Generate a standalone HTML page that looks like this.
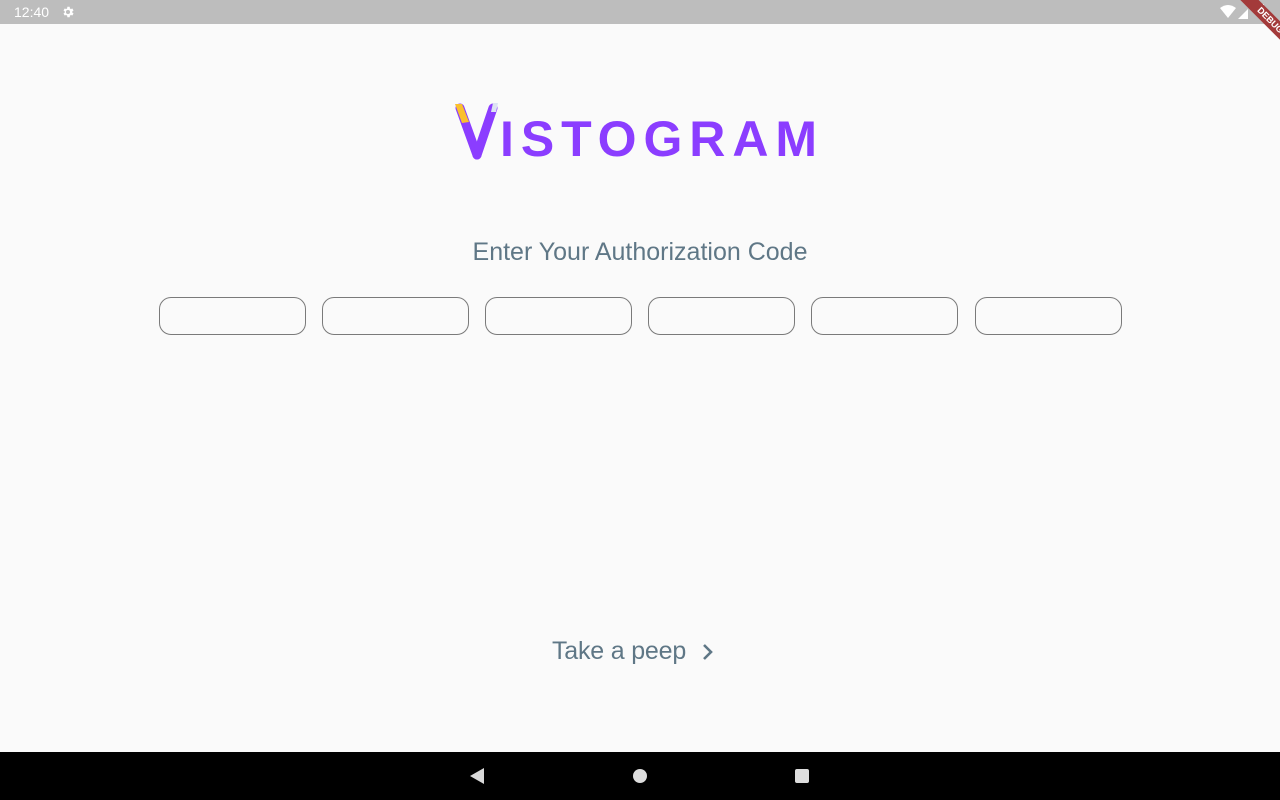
<!DOCTYPE html>
<html><head><style>
body{margin:0;width:1280px;height:800px;background:#fafafa;position:relative;overflow:hidden;font-family:"Liberation Sans",sans-serif}
.sb{position:absolute;top:0;left:0;width:1280px;height:24px;background:#bdbdbd;color:#fff;font-size:14px}
.nav{position:absolute;bottom:0;left:0;width:1280px;height:48px;background:#000}
.t{position:absolute;width:1280px;text-align:center;color:#5f7786}
.box{position:absolute;top:297px;width:145px;height:36px;border:1px solid #7a7a7a;border-radius:12px}
</style></head><body>
<div class="sb"><span style="position:absolute;left:14px;top:4px">12:40</span>
<svg style="position:absolute;left:61px;top:5px" width="14" height="14" viewBox="0 0 24 24"><path fill="#fff" d="M19.4 13a7.5 7.5 0 0 0 0-2l2.1-1.6-2-3.5-2.5 1a7 7 0 0 0-1.7-1L14.9 3h-4l-.4 2.9a7 7 0 0 0-1.7 1l-2.5-1-2 3.5L6.4 11a7.5 7.5 0 0 0 0 2l-2.1 1.6 2 3.5 2.5-1a7 7 0 0 0 1.7 1l.4 2.9h4l.4-2.9a7 7 0 0 0 1.7-1l2.5 1 2-3.5zM12 15.5a3.5 3.5 0 1 1 0-7 3.5 3.5 0 0 1 0 7z"/></svg>
<svg style="position:absolute;left:1220px;top:5px" width="16" height="13" viewBox="0 0 16 13"><path fill="#fff" d="M0 3Q8-3 16 3L8 13z"/></svg>
<svg style="position:absolute;left:1238px;top:9px" width="10" height="10"><path fill="#fff" d="M10 0V10H0z"/></svg>
<div style="position:absolute;left:1258px;top:4px;width:6px;height:12px;background:#fff"></div>
</div>
<div style="position:absolute;left:1230px;top:14px;width:80px;height:13px;background:#a33a3a;transform:rotate(45deg);color:#fff;font-size:9px;font-weight:bold;text-align:center;line-height:13px">DEBUG</div>
<svg style="position:absolute;left:440px;top:95px" width="400" height="75">
<path d="M20 13 L37 60" stroke="#8b3dff" stroke-width="9" stroke-linecap="round"/>
<path d="M53 13 L37 60" stroke="#8b3dff" stroke-width="9" stroke-linecap="round"/>
<path d="M15 9 L22 9 L29 27 L22 28z" fill="#fbc02d"/>
<path d="M53 8 L58 8 L56 17 L51 17z" fill="#dde3f3"/>
<text x="60" y="61" font-family="Liberation Sans" font-weight="bold" font-size="50" fill="#8b3dff" textLength="317" lengthAdjust="spacing">ISTOGRAM</text>
</svg>
<div class="t" style="top:238px;font-size:25px">Enter Your Authorization Code</div>
<div class="box" style="left:159px"></div><div class="box" style="left:322px"></div><div class="box" style="left:485px"></div><div class="box" style="left:648px"></div><div class="box" style="left:811px"></div><div class="box" style="left:975px"></div>
<div style="position:absolute;left:552px;top:637px;font-size:25px;color:#5f7786;letter-spacing:-0.2px">Take a peep</div>
<svg style="position:absolute;left:700px;top:642px" width="16" height="20" viewBox="0 0 16 20"><path d="M4 3l7 7-7 7" stroke="#5f7786" stroke-width="2.6" fill="none"/></svg>
<div class="nav">
<svg style="position:absolute;left:469px;top:16px" width="16" height="16"><path fill="#fff" d="M15 0V16L1 8z" opacity=".85"/></svg>
<div style="position:absolute;left:633px;top:17px;width:14px;height:14px;border-radius:50%;background:#ddd"></div>
<div style="position:absolute;left:795px;top:17px;width:14px;height:14px;border-radius:2px;background:#ddd"></div>
</div>
</body></html>
